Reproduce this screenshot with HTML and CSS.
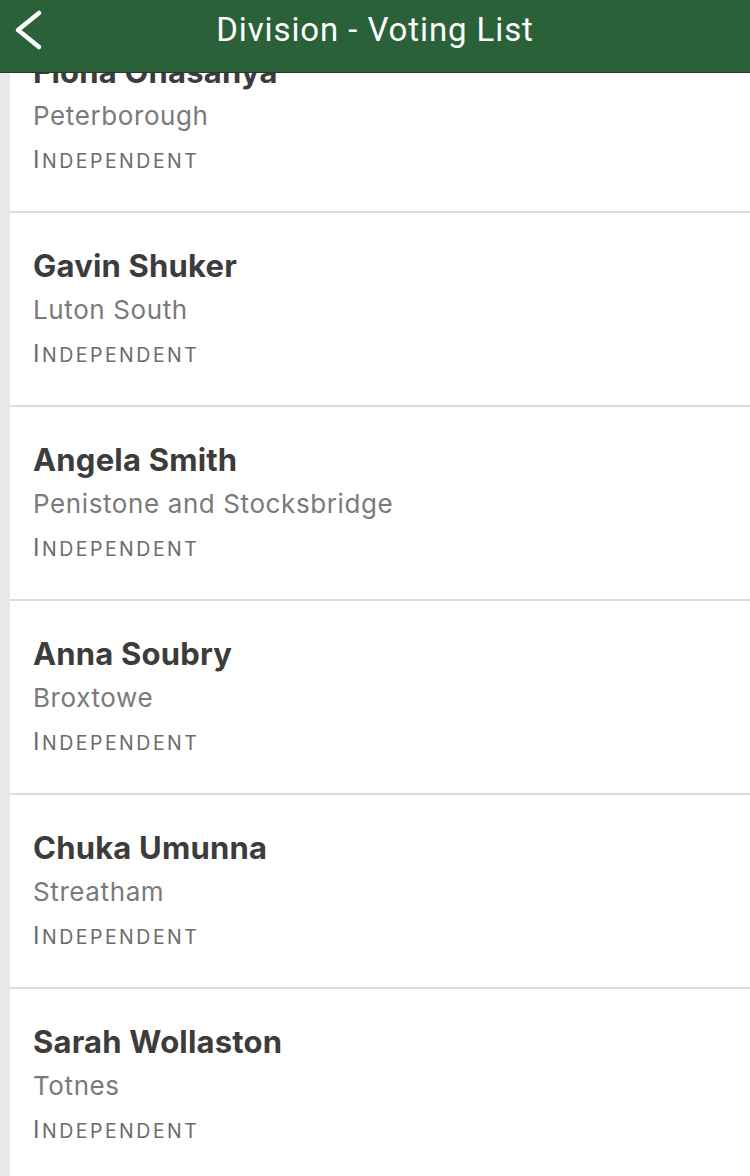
FILE: index.html
```html
<!DOCTYPE html>
<html>
<head>
<meta charset="utf-8">
<link rel="stylesheet" href="styles.css">
</head>
<body>
<header class="navbar">
  <div class="nav-side">
    <svg class="back" width="50" height="60" viewBox="0 0 50 60"><polyline points="39,13 18,30 39,47" fill="none" stroke="#ffffff" stroke-width="4.5" stroke-linecap="round" stroke-linejoin="round"/></svg>
  </div>
  <h1 class="title">Division - Voting List</h1>
  <div class="nav-side"></div>
</header>
<main class="list">
  <div class="row">
    <div class="name">Fiona Onasanya</div>
    <div class="seat">Peterborough</div>
    <div class="party">I<span class="sc">NDEPENDENT</span></div>
  </div>
  <div class="row">
    <div class="name">Gavin Shuker</div>
    <div class="seat">Luton South</div>
    <div class="party">I<span class="sc">NDEPENDENT</span></div>
  </div>
  <div class="row">
    <div class="name">Angela Smith</div>
    <div class="seat">Penistone and Stocksbridge</div>
    <div class="party">I<span class="sc">NDEPENDENT</span></div>
  </div>
  <div class="row">
    <div class="name">Anna Soubry</div>
    <div class="seat">Broxtowe</div>
    <div class="party">I<span class="sc">NDEPENDENT</span></div>
  </div>
  <div class="row">
    <div class="name">Chuka Umunna</div>
    <div class="seat">Streatham</div>
    <div class="party">I<span class="sc">NDEPENDENT</span></div>
  </div>
  <div class="row">
    <div class="name">Sarah Wollaston</div>
    <div class="seat">Totnes</div>
    <div class="party">I<span class="sc">NDEPENDENT</span></div>
  </div>
</main>
</body>
</html>
```
FILE: styles.css
```css
html, body {
  margin: 0;
  padding: 0;
}
body {
  background: #e8e8e8;
  font-family: Inter, "Noto Sans", sans-serif;
  width: 750px;
  height: 1176px;
  overflow: hidden;
}
.navbar {
  position: fixed;
  top: 0;
  left: 0;
  width: 750px;
  height: 72px;
  background: #2a6138;
  border-bottom: 1px solid #1d3f25;
  display: flex;
  align-items: flex-start;
  z-index: 10;
}
.nav-side {
  width: 80px;
  height: 60px;
  display: flex;
  align-items: center;
}
.back {
  display: block;
}
.title {
  flex: 1;
  margin: 0;
  padding-top: 10px;
  text-align: center;
  color: #ffffff;
  font-family: Roboto, "Liberation Sans", sans-serif;
  font-weight: 400;
  font-size: 33px;
  line-height: 40px;
  letter-spacing: 0.9px;
}
.list {
  margin-left: 10px;
  padding-top: 19px;
  background: #ffffff;
  min-height: 1157px;
}
.row {
  height: 194px;
  box-sizing: border-box;
  border-bottom: 2px solid #dcdcdc;
  padding-left: 23px;
  padding-top: 35px;
}
.name {
  font-size: 31px;
  line-height: 36px;
  font-weight: 700;
  letter-spacing: 0.2px;
  color: #3c3c3c;
}
.seat {
  margin-top: 10px;
  font-size: 26px;
  line-height: 32px;
  letter-spacing: 0.6px;
  color: #7a7a7a;
}
.party {
  margin-top: 13px;
  font-size: 24px;
  line-height: 30px;
  color: #6b6b6b;
  letter-spacing: 2.5px;
}
.sc {
  font-size: 19.5px;
}
```
